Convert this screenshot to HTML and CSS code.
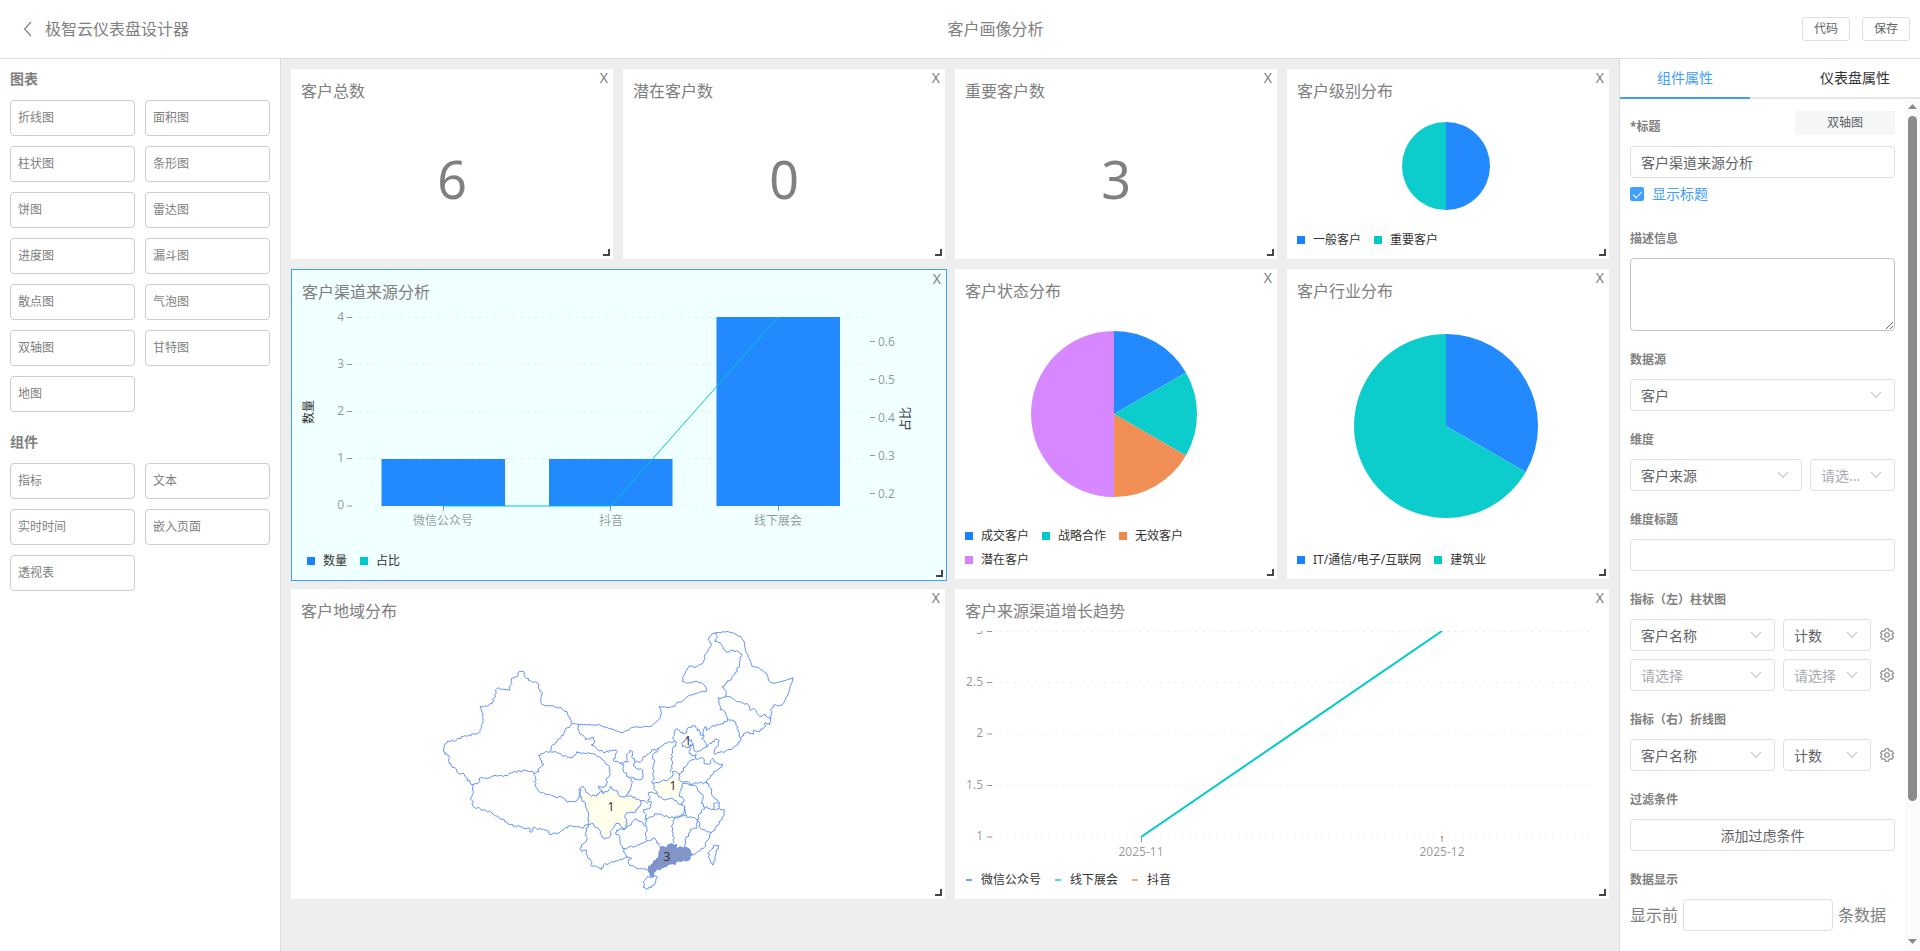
FILE: index.html
```html
<!DOCTYPE html>
<html lang="zh-CN">
<head>
<meta charset="utf-8">
<title>极智云仪表盘设计器</title>
<link rel="stylesheet" href="styles.css">
<script src="map.js" defer></script>
</head>
<body>
<svg class="defs" aria-hidden="true">
  <symbol id="chevron" viewBox="0 0 12 8"><path d="M1 1.2 6 6.2 11 1.2" fill="none" stroke="currentColor" stroke-width="1.1"/></symbol>
  <symbol id="gear" viewBox="0 0 16 16"><g fill="none" stroke="currentColor" stroke-width="1.2" stroke-linejoin="round"><path d="M6.300 .8h3.400l.5 2 1.500.9 2-.6 1.700 2.900-1.500 1.400v1.200l1.500 1.400-1.700 2.900-2-.6-1.500.9-.5 2H6.300l-.5-2-1.500-.9-2 .6L.6 10l1.500-1.400V7.400L.6 6l1.700-2.900 2 .6 1.500-.9z"/><circle cx="8" cy="8" r="2.600"/></g></symbol>
</svg>

<header class="topbar">
  <div class="brand">
    <button class="back" type="button" aria-label="返回"><svg width="10" height="16" viewBox="0 0 10 16"><path d="M8 1 1.500 8 8 15" fill="none" stroke="currentColor" stroke-width="1.200"/></svg></button>
    <span>极智云仪表盘设计器</span>
  </div>
  <div class="name">客户画像分析</div>
  <div class="actions">
    <button class="btn-mini" type="button">代码</button>
    <button class="btn-mini" type="button">保存</button>
  </div>
</header>

<div class="workspace">
  <aside class="palette">
    <h2>图表</h2>
    <div class="palette-grid">
      <button type="button">折线图</button><button type="button">面积图</button>
      <button type="button">柱状图</button><button type="button">条形图</button>
      <button type="button">饼图</button><button type="button">雷达图</button>
      <button type="button">进度图</button><button type="button">漏斗图</button>
      <button type="button">散点图</button><button type="button">气泡图</button>
      <button type="button">双轴图</button><button type="button">甘特图</button>
      <button type="button">地图</button>
    </div>
    <h2>组件</h2>
    <div class="palette-grid">
      <button type="button">指标</button><button type="button">文本</button>
      <button type="button">实时时间</button><button type="button">嵌入页面</button>
      <button type="button">透视表</button>
    </div>
  </aside>

  <main class="canvas">
    <section class="card">
      <h3>客户总数</h3>
      <button class="close" type="button" aria-label="删除">X</button>
      <div class="value">6</div>
      <i class="handle"></i>
    </section>
    <section class="card">
      <h3>潜在客户数</h3>
      <button class="close" type="button" aria-label="删除">X</button>
      <div class="value">0</div>
      <i class="handle"></i>
    </section>
    <section class="card">
      <h3>重要客户数</h3>
      <button class="close" type="button" aria-label="删除">X</button>
      <div class="value">3</div>
      <i class="handle"></i>
    </section>
    <section class="card">
      <h3>客户级别分布</h3>
      <button class="close" type="button" aria-label="删除">X</button>
      <svg class="chart" viewBox="0 0 302 117">
        <path class="f-blue" d="M149 55V11A44 44 0 0 1 149 99Z"/>
        <path class="f-teal" d="M149 55V99A44 44 0 0 1 149 11Z"/>
      </svg>
      <ul class="legend"><li class="blue">一般客户</li><li class="teal">重要客户</li></ul>
      <i class="handle"></i>
    </section>

    <section class="card wide selected">
      <h3>客户渠道来源分析</h3>
      <button class="close" type="button" aria-label="删除">X</button>
      <svg class="chart" viewBox="0 0 634 237">
        <path class="grid" d="M50 5.500H569M50 52.500H569M50 99.500H569M50 146.500H569M50 194H569"/>
        <path class="tick" d="M45 5.500h5M45 52.500h5M45 99.500h5M45 146.500h5M45 194h5M568 29.500h5M568 67.500h5M568 105.500h5M568 143.500h5M568 181.500h5M141.500 194v5M308.500 194v5M476.500 194v5"/>
        <g class="f-blue">
          <rect x="79.500" y="147" width="123.500" height="47"/>
          <rect x="247" y="147" width="123.500" height="47"/>
          <rect x="414.500" y="5" width="123.500" height="189"/>
        </g>
        <path class="trend thin" d="M141 194H309L476 5"/>
        <g class="axis end"><text x="42" y="9">4</text><text x="42" y="56">3</text><text x="42" y="103">2</text><text x="42" y="150">1</text><text x="42" y="197">0</text></g>
        <g class="axis"><text x="576" y="34">0.6</text><text x="576" y="72">0.5</text><text x="576" y="110">0.4</text><text x="576" y="148">0.3</text><text x="576" y="186">0.2</text></g>
        <g class="axis mid"><text x="141" y="213">微信公众号</text><text x="309" y="213">抖音</text><text x="476" y="213">线下展会</text></g>
        <g class="axis-title"><text transform="translate(11 100) rotate(-90)">数量</text><text transform="translate(608 107) rotate(-90)">占比</text></g>
      </svg>
      <ul class="legend inset"><li class="blue">数量</li><li class="teal">占比</li></ul>
      <i class="handle"></i>
    </section>
    <section class="card">
      <h3>客户状态分布</h3>
      <button class="close" type="button" aria-label="删除">X</button>
      <svg class="chart" viewBox="0 0 302 213">
        <path class="f-blue" d="M149 103V20A83 83 0 0 1 220.900 61.500Z"/>
        <path class="f-teal" d="M149 103 220.900 61.500A83 83 0 0 1 220.900 144.500Z"/>
        <path class="f-orange" d="M149 103 220.900 144.500A83 83 0 0 1 149 186Z"/>
        <path class="f-purple" d="M149 103V186A83 83 0 0 1 149 20Z"/>
      </svg>
      <ul class="legend"><li class="blue">成交客户</li><li class="teal">战略合作</li><li class="orange">无效客户</li><li class="purple">潜在客户</li></ul>
      <i class="handle"></i>
    </section>
    <section class="card">
      <h3>客户行业分布</h3>
      <button class="close" type="button" aria-label="删除">X</button>
      <svg class="chart" viewBox="0 0 302 237">
        <path class="f-blue" d="M149 115V23A92 92 0 0 1 228.700 161Z"/>
        <path class="f-teal" d="M149 115 228.700 161A92 92 0 1 1 149 23Z"/>
      </svg>
      <ul class="legend"><li class="blue">IT/通信/电子/互联网</li><li class="teal">建筑业</li></ul>
      <i class="handle"></i>
    </section>

    <section class="card wide">
      <h3>客户地域分布</h3>
      <button class="close" type="button" aria-label="删除">X</button>
      <svg class="chart" viewBox="0 0 634 268">
        <g class="map" transform="translate(129 -21) scale(.3333)">
          <path class="low" d="M450 535 460 530 467 545 480 555 500 558 515 545 520 552 530 545 540 530 550 540 562 543 568 558 585 560 605 558 620 568 635 572 630 590 612 608 590 608 584 620 590 632 588 650 580 658 570 642 558 640 552 652 545 660 540 680 525 688 515 675 508 660 495 652 485 640 475 645 475 620 470 595 462 575 450 560Z"/>
          <path class="low" d="M668 520 690 515 715 508 727 500 727 485 752 490 748 510 760 520 752 535 750 545 748 555 758 565 762 575 755 585 735 572 720 565 700 568 683 555 675 540Z"/>
          <path class="low" d="M755 400 768 388 785 390 790 400 775 412 758 410Z"/>
          <path class="high" d="M690 712 712 710 715 703 740 703 738 715 765 712 780 720 785 735 772 752 740 755 735 765 725 762 710 770 685 778 672 785 670 798 660 798 655 775 665 762 685 745Z"/>
          <path d="M130 524 120 518 108 502 103 493 85 490 80 480 64 466 57 455 57 437 44 432 40 420 46 400 63 391 72 395 100 379 112 379 150 364 154 350 158 325 155 300 150 290 164 287 186 282 192 265 201 235 215 239 240 240 245 205 262 200 268 184 280 184 286 202 305 215 322 218 328 238 337 250 333 280 345 288 380 291 410 304 420 322 428 341 422 346 405 360 400 376 382 390 368 405 361 424 325 436 331 450 340 466 326 475 327 486 311 488 290 482 250 486 225 496 200 498 163 505 152 503 146 518 130 524"/>
          <path d="M130 524 130 545 122 568 130 575 130 590 160 600 182 606 207 622 230 636 255 648 275 650 298 655 303 667 308 654 335 658 352 662 360 674 380 670 400 660 420 648 440 650 460 655 465 645 475 645"/>
          <path d="M311 488 316 505 315 525 325 543 345 552 370 558 395 562 412 577 435 575 447 560 450 535"/>
          <path d="M361 424 380 427 395 435 410 440 428 443 440 425 455 432 475 427 500 438 520 450 535 465 541 490 530 505 528 525 518 532 506 528 512 538 518 548"/>
          <path d="M445 343 448 370 460 378 466 390 490 382 493 398 484 405 500 415 520 428 555 420 563 425 556 445 550 452 570 460 595 455 590 440 600 420 608 425 605 440 618 455 610 468 635 480 640 492 635 508 615 510 605 500 600 505 590 495 580 480 580 465 570 460"/>
          <path class="even" d="M428 341 445 343 510 345 540 356 576 368 610 352 665 348 690 325 695 310 688 290 720 292 735 288 740 278 755 275 775 258 805 248 830 243 828 232 815 218 795 214 770 220 757 214 762 195 778 167 795 172 820 158 825 135 838 115 845 102 835 90 838 80 850 70 895 65 915 72 935 82 943 98 948 125 960 150 965 168 985 172 1010 190 1018 215 1035 220 1065 212 1090 203 1083 225 1075 250 1060 280"/>
          <path d="M1060 280 1050 286 1035 284 1025 295 1022 325 1020 345 1008 338 1000 355 985 365 972 360 970 373 950 367 932 383 930 395 910 412 885 425 855 433 853 425 862 410 868 392 858 387 845 400 830 412 828 400 815 385 822 378 810 372 808 358 802 362 795 346 778 352 765 370 752 368 745 358 735 360 730 380 735 392"/>
          <path d="M858 68 862 80 855 95 870 98 880 112 888 126 920 122 935 132 928 155 922 185 905 205 885 222 876 230 890 245 888 258 905 262 925 275 955 285 960 300 970 295 980 308 990 320 1005 313 1012 322 1025 325"/>
          <path d="M888 258 875 265 863 264 870 280 870 298 885 305 893 322 893 333 865 345 845 350 830 362 825 350 820 365 822 378M893 328 905 330 918 340 925 365 932 383"/>
          <path d="M828 412 810 423 795 425 790 405 780 405 778 430 790 437 798 432 797 445 780 452 760 478 755 490M797 445 820 445 826 462 838 463 848 445 858 458 878 462 877 470 865 478 850 490 838 505 830 517 805 520 785 523 775 515 760 518"/>
          <path d="M735 392 738 408 728 415 725 450 725 470 722 485M735 395 715 398 700 406 684 416 665 420 655 432 640 440 632 455 618 453M684 416 668 440 672 460 670 480 668 520"/>
          <path d="M605 505 605 530 595 545 590 558M680 550 655 548 660 560 653 570 665 580 660 595 640 600 650 615 645 628 680 612 700 618 730 622 760 615 765 590 755 585M635 572 655 580M765 590 770 618"/>
          <path d="M588 655 605 640 615 628 635 635 648 650M588 655 560 660 555 670 570 680 570 695 578 715 595 712 620 708 650 692 648 628M650 692 675 685 690 710M730 700 730 670 725 650 733 625 755 618 780 620 803 628 800 655 780 660 775 680 765 690 762 712"/>
          <path d="M760 520 778 525 800 530 805 545 820 560 815 580 825 592 810 610 803 628M830 515 845 540 850 560 865 575 868 595 850 598 825 592M850 597 852 580 865 580M868 597 882 598 880 620 868 640 845 668 830 665 808 650 803 628M845 668 835 690 820 715 785 738"/>
          <path d="M475 645 468 655 470 690 450 715 455 725 470 722 475 745 485 755 485 768 505 773 515 780 520 765 545 755 575 750 592 742 578 715M592 740 605 745 595 755 600 768 625 775 648 778 658 785"/>
          <path d="M640 815 650 803 672 798 682 803 672 825 655 836 640 832ZM866 707 855 705 838 725 835 740 848 765 855 745Z"/>
        </g>
        <g class="map-label"><text x="387" y="114">1</text><text x="372" y="159">1</text><text x="310" y="180">1</text><text x="366" y="230">3</text></g>
      </svg>
      <i class="handle"></i>
    </section>
    <section class="card wide">
      <h3>客户来源渠道增长趋势</h3>
      <button class="close" type="button" aria-label="删除">X</button>
      <svg class="chart clip" viewBox="0 0 634 237">
        <path class="grid" d="M27 .5H625M27 51.500H625M27 103H625M27 154.500H625M27 206H625"/>
        <path class="tick" d="M22 .5h5M22 51.500h5M22 103h5M22 154.500h5M22 206h5M176.500 206v5M477 206v5"/>
        <path class="trend" d="M176 206 477 0"/>
        <rect class="f-orange" x="476" y="205" width="2" height="2"/>
        <g class="axis end"><text x="18" y="3">3</text><text x="18" y="55">2.5</text><text x="18" y="106">2</text><text x="18" y="158">1.5</text><text x="18" y="209">1</text></g>
        <g class="axis mid"><text x="176" y="225">2025-11</text><text x="477" y="225">2025-12</text></g>
      </svg>
      <ul class="legend lines"><li class="blue">微信公众号</li><li class="teal">线下展会</li><li class="orange">抖音</li></ul>
      <i class="handle"></i>
    </section>
  </main>

  <aside class="inspector">
    <div class="tabs" role="tablist">
      <button class="active" type="button" role="tab" aria-selected="true">组件属性</button>
      <button type="button" role="tab" aria-selected="false">仪表盘属性</button>
    </div>
    <div class="scroller">
      <form class="props">
        <div class="head"><label for="title">*标题</label><span class="tag">双轴图</span></div>
        <input id="title" class="field" type="text" value="客户渠道来源分析">
        <label class="check"><input type="checkbox" checked>显示标题</label>

        <label for="desc">描述信息</label>
        <textarea id="desc" class="field"></textarea>

        <label for="source">数据源</label>
        <div class="pick"><select id="source" class="field"><option>客户</option></select><svg><use href="#chevron"/></svg></div>

        <label for="dim">维度</label>
        <div class="row dims">
          <div class="pick"><select id="dim" class="field"><option>客户来源</option></select><svg><use href="#chevron"/></svg></div>
          <div class="pick"><select class="field empty" aria-label="维度格式"><option>请选...</option></select><svg><use href="#chevron"/></svg></div>
        </div>

        <label for="dim-title">维度标题</label>
        <input id="dim-title" class="field" type="text">

        <label for="left">指标（左）柱状图</label>
        <div class="row metric">
          <div class="pick"><select id="left" class="field"><option>客户名称</option></select><svg><use href="#chevron"/></svg></div>
          <div class="pick"><select class="field" aria-label="聚合"><option>计数</option></select><svg><use href="#chevron"/></svg></div>
          <button class="gear" type="button" aria-label="设置"><svg><use href="#gear"/></svg></button>
        </div>
        <div class="row metric next">
          <div class="pick"><select class="field empty" aria-label="指标"><option>请选择</option></select><svg><use href="#chevron"/></svg></div>
          <div class="pick"><select class="field empty" aria-label="聚合"><option>请选择</option></select><svg><use href="#chevron"/></svg></div>
          <button class="gear" type="button" aria-label="设置"><svg><use href="#gear"/></svg></button>
        </div>

        <label for="right">指标（右）折线图</label>
        <div class="row metric">
          <div class="pick"><select id="right" class="field"><option>客户名称</option></select><svg><use href="#chevron"/></svg></div>
          <div class="pick"><select class="field" aria-label="聚合"><option>计数</option></select><svg><use href="#chevron"/></svg></div>
          <button class="gear" type="button" aria-label="设置"><svg><use href="#gear"/></svg></button>
        </div>

        <label for="filter">过滤条件</label>
        <button id="filter" class="field add" type="button">添加过虑条件</button>

        <label for="limit">数据显示</label>
        <div class="limit"><span>显示前</span><input id="limit" class="field" type="text"><span>条数据</span></div>
      </form>
      <div class="scrollbar" aria-hidden="true">
        <svg viewBox="0 0 9 5"><path d="M0 5 4.500 0 9 5Z"/></svg>
        <div class="track"><div class="thumb"></div></div>
        <svg viewBox="0 0 9 5"><path d="M0 0 4.500 5 9 0Z"/></svg>
      </div>
    </div>
  </aside>
</div>
</body>
</html>
```

FILE: map.js
```js
// Adds fine detail to the simplified province borders: every long segment is
// split and each new vertex is nudged sideways by a repeatable amount.
const noise = (x, y) => {
  const n = Math.sin(x * 12.9898 + y * 78.233) * 43758.5453;
  return (n - Math.floor(n)) * 2 - 1;
};

function refine(points, amount) {
  const out = [points[0]];
  for (let i = 1; i < points.length; i++) {
    const [ax, ay] = points[i - 1];
    const [bx, by] = points[i];
    const length = Math.hypot(bx - ax, by - ay) || 1;
    const steps = Math.max(1, Math.round(length / 5));
    for (let s = 1; s < steps; s++) {
      const x = ax + ((bx - ax) * s) / steps;
      const y = ay + ((by - ay) * s) / steps;
      const shift = noise(Math.round(x), Math.round(y)) * amount;
      out.push([x - ((by - ay) / length) * shift, y + ((bx - ax) / length) * shift]);
    }
    out.push([bx, by]);
  }
  return out;
}

document.querySelectorAll('.map path').forEach((path) => {
  const amount = path.classList.contains('even') ? 1.5 : 3.5;
  const parts = path.getAttribute('d').split('M').filter(Boolean);
  const d = parts.map((part) => {
    const closed = part.includes('Z');
    const nums = part.match(/[\d.]+/g).map(Number);
    const points = [];
    for (let i = 0; i < nums.length; i += 2) points.push([nums[i], nums[i + 1]]);
    if (closed) points.push(points[0]);
    return 'M' + refine(points, amount).map((p) => p.map((v) => v.toFixed(1)).join(' ')).join(' ') + (closed ? 'Z' : '');
  });
  path.setAttribute('d', d.join(''));
});
```

FILE: styles.css
```css
* { box-sizing: border-box; }

body {
  margin: 0;
  height: 100vh;
  display: flex;
  flex-direction: column;
  overflow: hidden;
  font-family: "Noto Sans", "Noto Sans CJK SC", sans-serif;
  font-size: 16px;
  color: #808080;
  background: #fff;
}

button, input, select, textarea { font: inherit; color: inherit; margin: 0; }
button { background: none; border: 0; padding: 0; }
.defs { position: absolute; width: 0; height: 0; }

/* Top bar */
.topbar {
  display: flex;
  flex: none;
  justify-content: space-between;
  align-items: center;
  height: 59px;
  padding: 0 10px;
  border-bottom: 1px solid #dcdcdc;
}
.brand { display: flex; align-items: center; line-height: 24px; }
.back { display: flex; justify-content: center; width: 35px; }
.name { line-height: 24px; }
.actions { display: flex; gap: 12px; }
.btn-mini {
  width: 48px;
  height: 24px;
  border: 1px solid #dcdfe6;
  border-radius: 3px;
  font-size: 12px;
  line-height: 20px;
  color: #606266;
}

.workspace { display: flex; flex: 1; min-height: 0; }

/* Component palette */
.palette {
  flex: none;
  width: 281px;
  padding: 0 10px;
  border-right: 1px solid #dcdcdc;
}
.palette h2 { margin: 0; padding-bottom: 2px; font-size: 14px; font-weight: 700; line-height: 39px; }
.palette-grid {
  display: grid;
  grid-template-columns: 1fr 1fr;
  gap: 10px;
  padding-bottom: 10px;
}
.palette-grid button {
  height: 36px;
  padding: 0 7px;
  border: 1px solid #ccc;
  border-radius: 4px;
  font-size: 12px;
  line-height: 34px;
  text-align: left;
}

/* Dashboard canvas */
.canvas {
  flex: 1;
  min-width: 0;
  display: grid;
  grid-template-columns: repeat(4, 1fr);
  grid-template-rows: minmax(190px, auto) minmax(310px, auto) minmax(310px, auto);
  align-content: start;
  gap: 10px;
  padding: 10px;
  background: #eee;
}
.card {
  position: relative;
  display: flex;
  flex-direction: column;
  min-width: 0;
  padding: 0 10px;
  background: #fff;
}
.card.wide { grid-column: span 2; }
.card.selected {
  margin: 0 -2px -2px 0;
  border: 1px solid #409eff;
  background: #f0ffff;
}
.card h3 { margin: 0; padding: 10px 0 8px; font-size: 16px; font-weight: 400; line-height: 24px; }
.close { position: absolute; top: 0; right: 5px; font-size: 14px; line-height: 18px; }
.handle {
  position: absolute;
  right: 3px;
  bottom: 3px;
  width: 7px;
  height: 7px;
  border-right: 2px solid #444;
  border-bottom: 2px solid #444;
}
.value {
  flex: 1;
  display: flex;
  align-items: center;
  justify-content: center;
  padding-bottom: 12px;
  font-size: 52px;
  line-height: 64px;
}

/* Charts */
.chart { display: block; flex: 1 1 0; width: 100%; min-height: 0; overflow: visible; }
.chart.clip { overflow: hidden; }
.f-blue { fill: #2389ff; }
.f-teal { fill: #0dcccc; }
.f-orange { fill: #f18e56; }
.f-purple { fill: #d787ff; }
.grid { stroke: #000; stroke-opacity: .06; stroke-dasharray: 3 4; }
.tick { stroke: #000; stroke-opacity: .4; }
.trend { fill: none; stroke: #00c9c9; stroke-width: 2; }
.trend.thin { stroke-width: 1; }
.axis { font-size: 12px; fill: #000; fill-opacity: .42; }
.end { text-anchor: end; }
.mid { text-anchor: middle; }
.axis-title { font-size: 12px; fill: #333; text-anchor: middle; }
.map { fill: none; stroke: #5b8ff9; stroke-width: 3; stroke-linejoin: round; }
.map .low { fill: #ffffeb; }
.map .high { fill: #8494c4; }
.map-label { font-size: 12px; fill: #333; text-anchor: middle; }

.legend {
  display: flex;
  flex-wrap: wrap;
  column-gap: 13px;
  margin: 0;
  padding: 0 16px 7px 0;
  list-style: none;
  font-size: 12px;
  line-height: 24px;
  color: #333;
}
.legend.inset { padding-left: 5px; }
.legend li { display: flex; align-items: center; gap: 8px; }
.legend li::before { content: ""; width: 8px; height: 8px; background: currentColor; }
.legend .blue::before { background: #1783ff; }
.legend .teal::before { background: #00c9c9; }
.legend .orange::before { background: #f0884d; }
.legend .purple::before { background: #d580ff; }
.legend.lines li::before { width: 6px; height: 2px; margin: 0 1px; opacity: .7; }

/* Property inspector */
.inspector {
  display: flex;
  flex: none;
  flex-direction: column;
  width: 301px;
  border-left: 1px solid #dcdcdc;
}
.tabs {
  display: flex;
  flex: none;
  justify-content: space-between;
  height: 40px;
  box-shadow: inset 0 -2px #e4e7ed;
}
.tabs button {
  width: 130px;
  border-bottom: 2px solid transparent;
  font-size: 14px;
  line-height: 38px;
  color: #303133;
}
.tabs .active { color: #409eff; border-color: #409eff; }
.scroller { display: flex; flex: 1; min-height: 0; }
.props {
  flex: 1;
  min-width: 0;
  display: flex;
  flex-direction: column;
  padding: 0 10px;
  overflow: hidden;
}
.props label { flex: none; margin-top: 10px; font-size: 12px; font-weight: 700; line-height: 38px; }
.props .head { display: flex; justify-content: space-between; align-items: center; }
.props .head label { margin-top: 9px; }
.tag {
  width: 100px;
  background: #f4f6f8;
  font-size: 12px;
  line-height: 24px;
  text-align: center;
  color: #606266;
}
.field {
  display: block;
  flex: none;
  width: 100%;
  height: 32px;
  padding: 0 10px;
  border: 1px solid #dcdfe6;
  border-radius: 4px;
  background: #fff;
  font-size: 14px;
  color: #606266;
  outline: 0;
}
textarea.field { height: 73px; border-color: #c0c4cc; }
.props .check {
  display: flex;
  align-items: center;
  gap: 8px;
  margin: 0;
  font-size: 14px;
  font-weight: 400;
  line-height: 32px;
  color: #409eff;
}
.check input {
  appearance: none;
  width: 14px;
  height: 14px;
  border-radius: 2px;
  background: #409eff;
  display: grid;
  place-items: center;
}
.check input:checked::before {
  content: "";
  width: 8px;
  height: 4px;
  margin-bottom: 2px;
  border-left: 1px solid #fff;
  border-bottom: 1px solid #fff;
  transform: rotate(-45deg);
}
.pick { position: relative; min-width: 0; }
.pick select { appearance: none; padding: 0 10px; }
.pick .empty { color: #a8abb2; }
.pick svg {
  position: absolute;
  right: 13px;
  top: 12px;
  width: 12px;
  height: 8px;
  color: #c0c4cc;
  pointer-events: none;
}
.row { display: grid; flex: none; align-items: center; gap: 8px; }
.dims { grid-template-columns: 1fr 85px; }
.metric { grid-template-columns: 1fr 88px 16px; }
.next { margin-top: 8px; }
.metric .gear { display: flex; justify-content: center; }
.gear svg { width: 14px; height: 14px; color: #808080; }
.limit { display: flex; align-items: center; gap: 5px; line-height: 32px; }
.limit .field { width: 150px; }

.scrollbar {
  display: flex;
  flex: none;
  flex-direction: column;
  align-items: center;
  width: 15px;
  padding: 5px 0 7px;
  background: #fbfbfb;
}
.scrollbar svg { flex: none; width: 9px; height: 5px; fill: #8b8b8b; }
.track { flex: 1; padding: 7px 0; }
.thumb { width: 9px; height: 84%; border-radius: 5px; background: #8b8b8b; }
```
